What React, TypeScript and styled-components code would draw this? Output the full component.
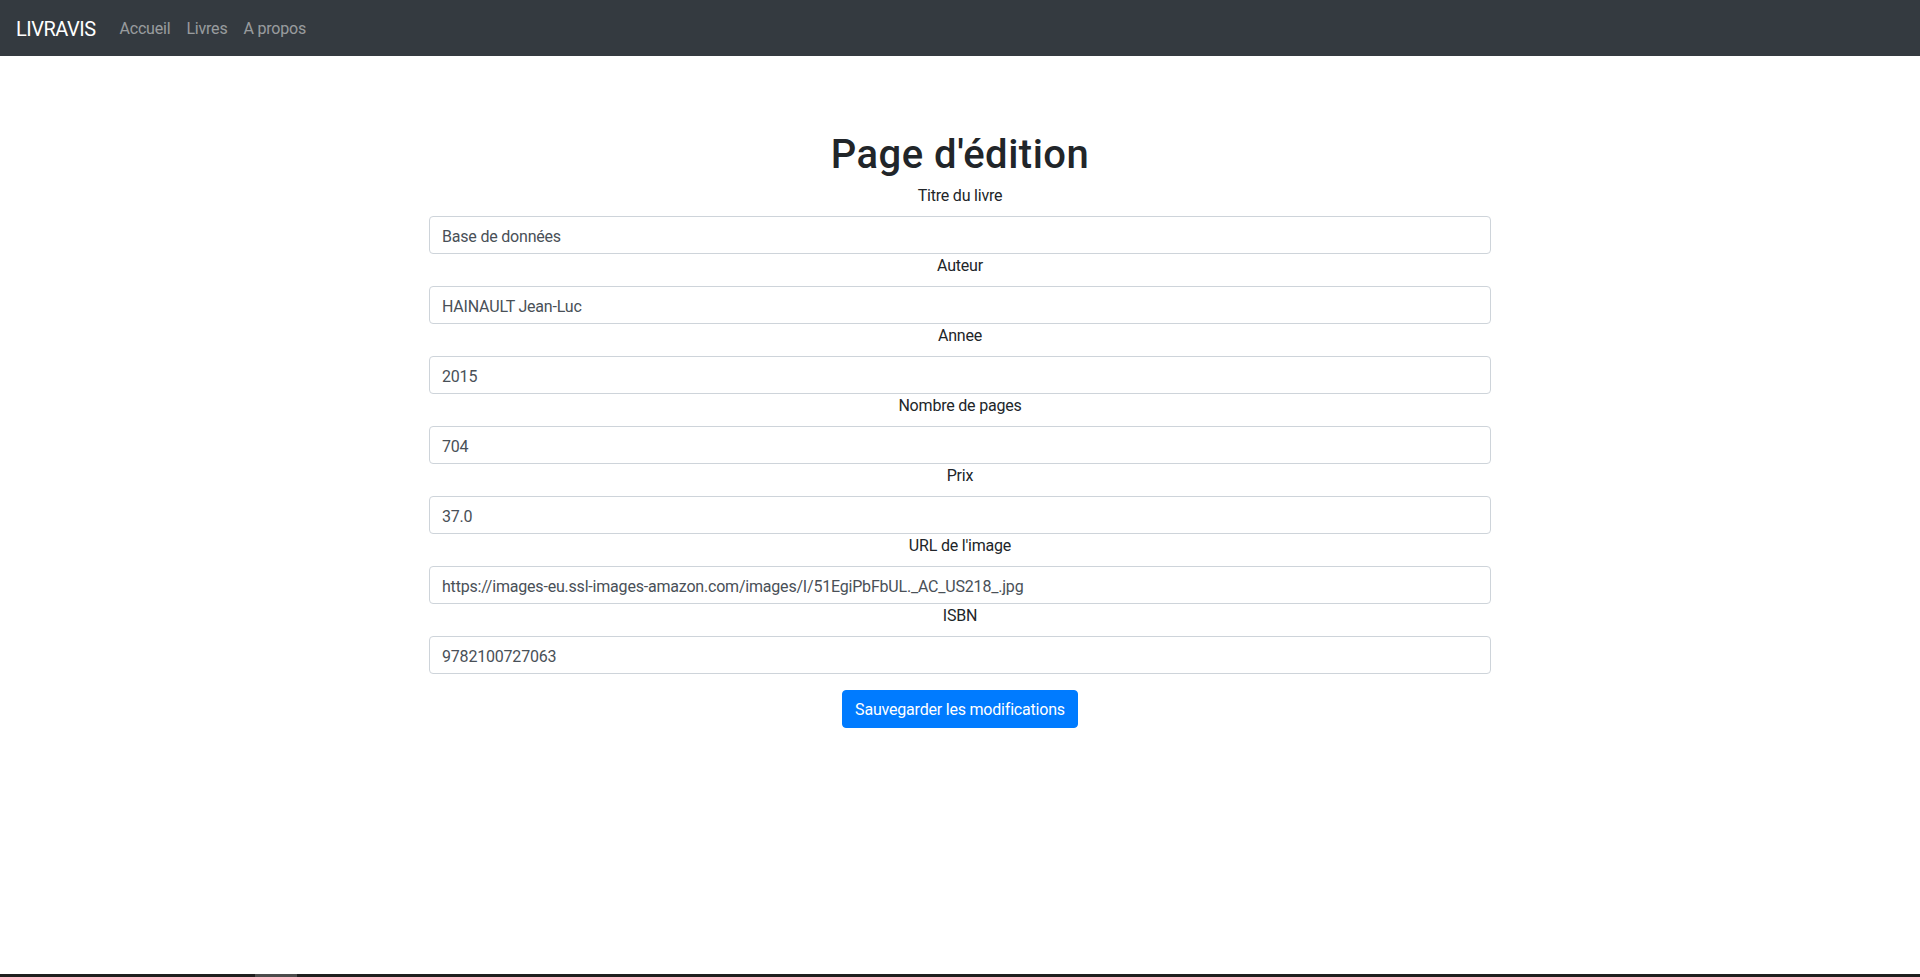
import styled, { createGlobalStyle } from "styled-components"

const GlobalStyle = createGlobalStyle`
  html, body {
    margin: 0;
    padding: 0;
    background: #fff;
  }
  body {
    font-family: "Segoe UI", Roboto, sans-serif;
    font-size: 16px;
    line-height: 1.5;
    letter-spacing: -0.2px;
    color: #212529;
  }
  *, *::before, *::after {
    box-sizing: border-box;
  }
`

const Navbar = styled.nav`
  display: flex;
  align-items: center;
  height: 56px;
  padding: 9px 16px 7px;
  background-color: #343a40;
`

const Brand = styled.a`
  font-size: 20px;
  line-height: 30px;
  letter-spacing: -0.5px;
  color: #fff;
  margin-right: 16px;
  text-decoration: none;
`

const NavLinks = styled.div`
  display: flex;
`

const NavLink = styled.a`
  padding: 8px 8px;
  color: rgba(255, 255, 255, 0.5);
  text-decoration: none;
`

const Main = styled.main`
  max-width: 1062px;
  margin: 72px auto 0;
  display: flex;
  flex-direction: column;
`

const Title = styled.h1`
  margin: 0 0 5px;
  padding-top: 3px;
  font-size: 40px;
  font-weight: 500;
  line-height: 1.2;
  letter-spacing: 0.5px;
  text-align: center;
`

const Form = styled.form`
  display: flex;
  flex-direction: column;
  align-items: stretch;
`

const Label = styled.label`
  display: block;
  text-align: center;
  margin-bottom: 8px;
`

const Input = styled.input`
  display: block;
  width: 100%;
  height: 38px;
  padding: 7px 12px 5px;
  font: inherit;
  letter-spacing: inherit;
  color: #495057;
  background: #fff;
  border: 1px solid #ced4da;
  border-radius: 4px;
`

const Actions = styled.div`
  display: flex;
  justify-content: center;
  margin-top: 16px;
`

const Button = styled.button`
  height: 38px;
  padding: 7px 12px 5px;
  font: inherit;
  letter-spacing: inherit;
  color: #fff;
  background-color: #007bff;
  border: 1px solid #007bff;
  border-radius: 4px;
  cursor: pointer;
`

const ScrollTrack = styled.div`
  position: fixed;
  left: 0;
  right: 0;
  bottom: 0;
  height: 3px;
  background: #1f1f1f;
`

const ScrollThumb = styled.div`
  margin-left: 255px;
  width: 42px;
  height: 100%;
  background: #4b4b4b;
`

const fields = [
  { label: "Titre du livre", value: "Base de données" },
  { label: "Auteur", value: "HAINAULT Jean-Luc" },
  { label: "Annee", value: "2015" },
  { label: "Nombre de pages", value: "704" },
  { label: "Prix", value: "37.0" },
  { label: "URL de l'image", value: "https://images-eu.ssl-images-amazon.com/images/I/51EgiPbFbUL._AC_US218_.jpg" },
  { label: "ISBN", value: "9782100727063" },
]

export default function App() {
  return (
    <>
      <GlobalStyle />
      <Navbar>
        <Brand href="#">LIVRAVIS</Brand>
        <NavLinks>
          <NavLink href="#">Accueil</NavLink>
          <NavLink href="#">Livres</NavLink>
          <NavLink href="#">A propos</NavLink>
        </NavLinks>
      </Navbar>
      <Main>
        <Title>Page d'édition</Title>
        <Form onSubmit={ev => ev.preventDefault()}>
          {fields.map(f => (
            <div key={f.label}>
              <Label>{f.label}</Label>
              <Input type="text" defaultValue={f.value} />
            </div>
          ))}
          <Actions>
            <Button type="submit">Sauvegarder les modifications</Button>
          </Actions>
        </Form>
      </Main>
      <ScrollTrack>
        <ScrollThumb />
      </ScrollTrack>
    </>
  )
}
